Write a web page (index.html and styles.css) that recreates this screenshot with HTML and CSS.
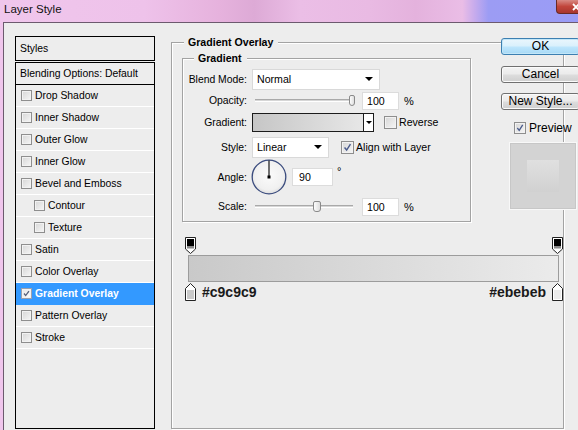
FILE: index.html
```html
<!DOCTYPE html>
<html>
<head>
<meta charset="utf-8">
<title>Layer Style</title>
<link rel="stylesheet" href="styles.css">
</head>
<body>
<div class="window">
  <div class="titlebar">
    <span class="title">Layer Style</span>
    <div class="close"><svg class="close-x" viewBox="0 0 10 8" width="10" height="8"><path d="M1 1 L7 7 M7 1 L1 7" stroke="#fff" stroke-width="1.8"/></svg></div>
  </div>
  <div class="body">
    <div class="left">
      <div class="styles-head">Styles</div>
      <div class="styles-list">
        <div class="blend-row">Blending Options: Default</div>
        <div class="row"><span class="cb"></span>Drop Shadow</div>
        <div class="row"><span class="cb"></span>Inner Shadow</div>
        <div class="row"><span class="cb"></span>Outer Glow</div>
        <div class="row"><span class="cb"></span>Inner Glow</div>
        <div class="row"><span class="cb"></span>Bevel and Emboss</div>
        <div class="row indent"><span class="cb"></span>Contour</div>
        <div class="row indent"><span class="cb"></span>Texture</div>
        <div class="row"><span class="cb"></span>Satin</div>
        <div class="row"><span class="cb"></span>Color Overlay</div>
        <div class="row selected"><span class="cb checked"><svg viewBox="0 0 11 11" width="11" height="11"><path d="M2.5 5.5 L4.5 8 L8.5 2.5" fill="none" stroke="#55607a" stroke-width="1.6"/></svg></span>Gradient Overlay</div>
        <div class="row"><span class="cb"></span>Pattern Overlay</div>
        <div class="row"><span class="cb"></span>Stroke</div>
      </div>
    </div>

    <div class="center">
      <div class="group outer">
        <div class="group-title">Gradient Overlay</div>
        <div class="group inner">
          <div class="group-title small">Gradient</div>
          <div class="fields">
            <div class="field f-blend">
              <span class="lbl">Blend Mode:</span>
              <div class="select w-blend"><span class="sel-text">Normal</span><i class="arrow"></i></div>
            </div>
            <div class="field f-opacity">
              <span class="lbl">Opacity:</span>
              <div class="slider"><span class="thumb t-opacity"></span></div>
              <div class="num">100</div>
              <span class="unit">%</span>
            </div>
            <div class="field f-gradient">
              <span class="lbl">Gradient:</span>
              <div class="gpick"><span class="gfill"></span><span class="gdrop"><i class="arrow small"></i></span></div>
              <span class="cb big cb-reverse"></span><span class="cb-label">Reverse</span>
            </div>
            <div class="field f-style">
              <span class="lbl">Style:</span>
              <div class="select w-style"><span class="sel-text">Linear</span><i class="arrow"></i></div>
              <span class="cb big cb-align checked"><svg viewBox="0 0 13 13" width="13" height="13"><path d="M3 6.5 L5.5 9.5 L10 2.5" fill="none" stroke="#4a5b8c" stroke-width="1.7"/></svg></span><span class="cb-label">Align with Layer</span>
            </div>
            <div class="field f-angle">
              <span class="lbl">Angle:</span>
              <svg class="dial" viewBox="0 0 36 36" width="36" height="36">
                <defs>
                  <radialGradient id="dialfill" cx="50%" cy="45%" r="55%">
                    <stop offset="0" stop-color="#fbfbfb"/>
                    <stop offset="0.8" stop-color="#f0f0f0"/>
                    <stop offset="1" stop-color="#dcdcdc"/>
                  </radialGradient>
                </defs>
                <circle cx="18" cy="18" r="16.8" fill="url(#dialfill)" stroke="#3b4c7e" stroke-width="1.3"/>
                <line x1="18" y1="18" x2="18" y2="1.5" stroke="#000" stroke-width="1.1"/>
                <rect x="16.5" y="16.5" width="3" height="3" fill="#000"/>
              </svg>
              <div class="num w-angle">90</div>
              <span class="deg">°</span>
            </div>
            <div class="field f-scale">
              <span class="lbl">Scale:</span>
              <div class="slider"><span class="thumb t-scale"></span></div>
              <div class="num">100</div>
              <span class="unit">%</span>
            </div>
          </div>
        </div>

        <div class="editor">
          <div class="stops top">
            <svg class="stop" viewBox="0 0 11 17" width="11" height="17"><path d="M0.5 0.5 H10.5 V12 L5.5 16.5 L0.5 12 Z" fill="#fff" stroke="#222"/><rect x="2" y="2" width="7" height="7" fill="#000"/><rect x="2" y="9" width="7" height="2.5" fill="#8a8a8a"/></svg>
            <svg class="stop" viewBox="0 0 11 17" width="11" height="17"><path d="M0.5 0.5 H10.5 V12 L5.5 16.5 L0.5 12 Z" fill="#fff" stroke="#222"/><rect x="2" y="2" width="7" height="7" fill="#000"/><rect x="2" y="9" width="7" height="2.5" fill="#8a8a8a"/></svg>
          </div>
          <div class="bar"></div>
          <div class="stops bottom">
            <svg class="stop" viewBox="0 0 11 18" width="11" height="18"><path d="M5.5 0.5 L10.5 5.5 V17.5 H0.5 V5.5 Z" fill="#fff" stroke="#222"/><rect x="2" y="7" width="7" height="9" fill="#c9c9c9"/></svg>
            <span class="hex">#c9c9c9</span>
            <span class="spacer"></span>
            <span class="hex">#ebebeb</span>
            <svg class="stop" viewBox="0 0 11 18" width="11" height="18"><path d="M5.5 0.5 L10.5 5.5 V17.5 H0.5 V5.5 Z" fill="#fff" stroke="#222"/><rect x="2" y="7" width="7" height="9" fill="#ebebeb"/></svg>
          </div>
        </div>
      </div>
    </div>

    <div class="right">
      <div class="btn btn-ok">OK</div>
      <div class="btn">Cancel</div>
      <div class="btn">New Style...</div>
      <div class="preview-row"><span class="cb big checked"><svg viewBox="0 0 13 13" width="12" height="12"><path d="M3 6.5 L5.5 9.5 L10 2.5" fill="none" stroke="#4a5b8c" stroke-width="1.7"/></svg></span><span class="preview-label">Preview</span></div>
      <div class="preview-box"><div class="preview-swatch"></div></div>
    </div>
  </div>
</div>
</body>
</html>
```

FILE: styles.css
```css
* { box-sizing: border-box; }

html, body {
  margin: 0;
  padding: 0;
}

body {
  width: 578px;
  height: 430px;
  overflow: hidden;
  font-family: "Liberation Sans", Arial, sans-serif;
  font-size: 10.4px;
  color: #000;
}

.window {
  width: 578px;
  height: 430px;
  display: flex;
  flex-direction: column;
  background: linear-gradient(90deg, #f0c6ec 0%, #eec2ea 25%, #e6b2dd 38%, #ddaad6 44%, #ebbee6 52%, #e9bae3 64%, #e4b2dd 72%, #eabde6 80%, #c9acec 82%, #9c9cf4 84.5%, #9a9cf6 100%);
}

/* ---------- title bar ---------- */
.titlebar {
  height: 22px;
  flex: none;
  display: flex;
  align-items: flex-start;
}

.title {
  padding: 2px 0 0 4px;
  line-height: 14px;
  font-size: 11.5px;
  color: #111;
}

.close {
  margin-left: auto;
  width: 22px;
  height: 14px;
  background: linear-gradient(#d88a84, #c1453b 50%, #a8362e);
  border: 1px solid #6a2a26;
  border-top: none;
  border-right: none;
  border-radius: 0 0 0 4px;
  overflow: hidden;
  display: flex;
  align-items: center;
}

.close-x {
  display: block;
  margin-left: 15px;
  flex: none;
}

/* ---------- body ---------- */
.body {
  flex: 1;
  margin-left: 3px;
  background: #ededed;
  border-left: 1px solid #6c5a6e;
  border-top: 1px solid #6c5a6e;
  display: flex;
  overflow: hidden;
}

/* ---------- left styles list ---------- */
.left {
  width: 140px;
  flex: none;
  margin: 13px 0 1px 11px;
  display: flex;
  flex-direction: column;
}

.styles-head {
  height: 25px;
  border: 1px solid #000;
  padding-left: 4px;
  line-height: 23px;
}

.styles-list {
  flex: 1;
  margin-top: 1px;
  border: 1px solid #000;
}

.blend-row {
  height: 22px;
  line-height: 21px;
  padding-left: 4px;
  border-bottom: 1px solid #000;
}

.row {
  height: 22px;
  border-bottom: 1px solid #fff;
  display: flex;
  align-items: center;
  padding-left: 5px;
}

.row.indent {
  padding-left: 18px;
}

.row.selected {
  background: #3399ff;
  color: #fff;
  font-weight: bold;
  border-bottom-color: #3399ff;
}

.cb {
  width: 11px;
  height: 11px;
  flex: none;
  border: 1px solid #8e8e8e;
  background: linear-gradient(135deg, #d6d6d6, #f6f6f6);
  box-shadow: inset 0 0 0 1px #f2f2f2;
  margin-right: 3px;
  display: flex;
  align-items: center;
  justify-content: center;
}

.cb svg { display: block; }

.row .cb.checked {
  background: linear-gradient(135deg, #e6e6e6, #fdfdfd);
  border-color: #9aa0ad;
}

.cb.big {
  width: 13px;
  height: 13px;
}

/* ---------- center ---------- */
.center {
  width: 310px;
  flex: none;
  margin: 19px 0 1px 16px;
  display: flex;
}

.group {
  border: 1px solid #a3a3a3;
  box-shadow: inset 1px 1px 0 #fff, 1px 1px 0 #fff;
}

.group.outer {
  flex: 1;
}

.group-title {
  display: block;
  width: max-content;
  margin: -7px 0 0 12px;
  padding: 0 5px 0 4px;
  background: #ededed;
  line-height: 13px;
  height: 13px;
  font-weight: bold;
  font-size: 10.6px;
}

.group-title.small {
  margin-left: 11px;
}

.group.inner {
  margin: 9px 0 0 10px;
  width: 289px;
  padding-bottom: 4px;
}

.fields {
  margin-top: 3px;
  display: flex;
  flex-direction: column;
}

.field {
  display: flex;
  align-items: center;
  white-space: nowrap;
}

.f-blend { height: 22px; }
.f-opacity { height: 21px; }
.f-gradient { height: 22px; }
.f-style { height: 22px; margin-top: 3px; }
.f-angle { height: 38px; }
.f-scale { height: 21px; }

.lbl {
  width: 64px;
  flex: none;
  text-align: right;
  margin-right: 5px;
}

.select {
  height: 21px;
  background: #fff;
  border: 1px solid #d9d9d9;
  display: flex;
  align-items: center;
  padding: 0 6px 0 4px;
  flex: none;
}

.w-blend { width: 128px; }
.w-style { width: 77px; }

.sel-text {
  flex: 1;
  font-size: 10.6px;
}

.arrow {
  width: 0;
  height: 0;
  border-left: 4px solid transparent;
  border-right: 4px solid transparent;
  border-top: 4px solid #000;
}

.arrow.small {
  border-left-width: 3px;
  border-right-width: 3px;
  border-top-width: 3px;
}

.slider {
  width: 100px;
  height: 12px;
  flex: none;
  margin: 0 7px 0 3px;
  display: flex;
  align-items: center;
  background: linear-gradient(#ededed 0, #ededed 4px, #a9a9a9 4px, #a9a9a9 5px, #d6d6d6 5px, #d6d6d6 6px, #fff 6px, #fff 7px, #ededed 7px);
}

.thumb {
  width: 8px;
  height: 11px;
  border: 1px solid #8a8a8a;
  border-radius: 2px 2px 3px 3px;
  background: linear-gradient(90deg, #fdfdfd, #dedede);
}

.t-opacity { margin-left: 94px; }
.t-scale { margin-left: 58px; }

.f-scale .slider { width: 98px; margin-right: 9px; }

.num {
  width: 37px;
  height: 18px;
  flex: none;
  background: #fff;
  border: 1px solid #dcdcdc;
  padding-left: 4px;
  line-height: 16px;
  font-size: 10.6px;
}

.w-angle {
  width: 41px;
  padding-left: 6px;
}

.unit {
  margin-left: 5px;
  font-size: 11px;
}

.deg {
  margin-left: 4px;
  align-self: flex-start;
  margin-top: 7px;
  font-size: 11px;
}

.gpick {
  width: 122px;
  height: 19px;
  flex: none;
  border: 1px solid #1c1c1c;
  display: flex;
  margin-top: 1px;
}

.gfill {
  flex: 1;
  background: linear-gradient(90deg, #c6c6c6, #e7e7e7);
}

.gdrop {
  width: 10px;
  border-left: 1px solid #1c1c1c;
  background: #fff;
  display: flex;
  align-items: center;
  justify-content: center;
}

.cb-reverse { margin-left: 10px; margin-right: 2px; }
.cb-align { margin-left: 12px; margin-right: 2px; }

.cb-label {
  font-size: 10.6px;
}

.dial {
  display: block;
  margin-left: -1px;
  flex: none;
}

.f-angle .num { margin-left: 5px; }

/* ---------- gradient editor ---------- */
.editor {
  width: 378px;
  margin: 10px 0 0 13px;
  padding: 5px 0 4px;
  background: #ededed;
}

.stops {
  display: flex;
  justify-content: space-between;
  align-items: center;
}

.stops.top {
  height: 17px;
}

.stop { display: block; flex: none; }

.bar {
  margin: 1px 4px 1px 3px;
  height: 27px;
  border: 1px solid #9c9c9c;
  background: linear-gradient(90deg, #c9c9c9, #ebebeb);
}

.stops.bottom {
  height: 18px;
}

.hex {
  font-weight: bold;
  font-size: 14px;
  color: #1a1a1a;
  margin: 0 6px;
  line-height: 16px;
}

.spacer { flex: 1; }

/* ---------- right buttons ---------- */
.right {
  width: 80px;
  flex: none;
  margin: 15px 0 0 20px;
  display: flex;
  flex-direction: column;
  align-items: flex-start;
}

.btn {
  width: 79px;
  height: 17px;
  border: 1px solid #707070;
  border-radius: 3px;
  background: linear-gradient(#f3f3f3 0%, #ebebeb 48%, #dddddd 52%, #cfcfcf 100%);
  box-shadow: inset 0 0 0 1px #fbfbfb;
  text-align: center;
  font-size: 12px;
  line-height: 15px;
  margin-bottom: 10px;
  color: #000;
}

.btn-ok {
  border-color: #3c7fb1;
  background: linear-gradient(#eaf6fd 0%, #d9f0fc 48%, #bee6fd 52%, #a7d9f5 100%);
  box-shadow: inset 0 0 0 1px #c2e6f8;
  margin-bottom: 11px;
}

.preview-row {
  display: flex;
  align-items: center;
  margin: 1px 0 0 13px;
  height: 14px;
}

.preview-row .cb.big {
  width: 12px;
  height: 12px;
  margin-right: 3px;
}

.preview-label {
  font-size: 12px;
}

.preview-box {
  margin: 8px 0 0 9px;
  width: 66px;
  height: 66px;
  background: #d3d3d3;
  border: 1px solid #c7c7c7;
  box-shadow: 0 0 0 1px #f8f8f8;
  display: flex;
  align-items: center;
  justify-content: center;
}

.preview-swatch {
  width: 32px;
  height: 32px;
  background: linear-gradient(#e0e0e0, #d1d1d1);
}
```
